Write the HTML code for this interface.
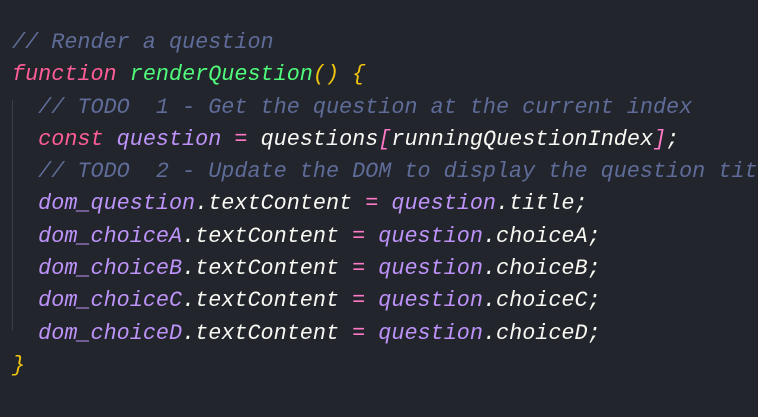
<!DOCTYPE html>
<html><head><style>
html,body{margin:0;padding:0;}
body{width:758px;height:417px;background:#22252b;overflow:hidden;position:relative;}
pre{margin:0;position:absolute;left:12px;top:27px;font-family:"Liberation Mono",monospace;font-style:italic;font-size:21.8px;line-height:32.3px;color:#f8f8f2;white-space:pre;}
.guide{position:absolute;left:12px;top:100px;width:1px;height:230px;background:#3a3e46;}
.c{color:#5f6c99}.k{color:#ff5c9a}.f{color:#50fa7b}.y{color:#f1c40f}.p{color:#bd93f9}.o{color:#ff79c6}
</style></head><body>
<div class="guide"></div>
<pre><span class="c">// Render a question</span>
<span class="k">function</span> <span class="f">renderQuestion</span><span class="y">()</span> <span class="y">{</span>
  <span class="c">// TODO  1 - Get the question at the current index</span>
  <span class="k">const</span> <span class="p">question</span> <span class="o">=</span> questions<span class="o">[</span>runningQuestionIndex<span class="o">]</span>;
  <span class="c">// TODO  2 - Update the DOM to display the question title</span>
  <span class="p">dom_question</span>.textContent <span class="o">=</span> <span class="p">question</span>.title;
  <span class="p">dom_choiceA</span>.textContent <span class="o">=</span> <span class="p">question</span>.choiceA;
  <span class="p">dom_choiceB</span>.textContent <span class="o">=</span> <span class="p">question</span>.choiceB;
  <span class="p">dom_choiceC</span>.textContent <span class="o">=</span> <span class="p">question</span>.choiceC;
  <span class="p">dom_choiceD</span>.textContent <span class="o">=</span> <span class="p">question</span>.choiceD;
<span class="y">}</span></pre>
</body></html>
